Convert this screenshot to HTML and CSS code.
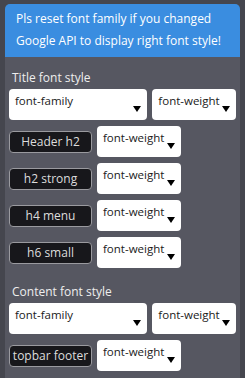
FILE: index.html
```html
<!DOCTYPE html>
<html lang="en">
<head>
    <meta charset="UTF-8">
    <title>Font style</title>
    <link rel="stylesheet" href="styles.css">
</head>
<body>
    <div class="panel">
        <div class="notice">Pls reset font family if you changed Google API to display right font style!</div>

        <div class="group">
            <div class="group-title">Title font style</div>
            <div class="row">
                <div class="select wide">font-family<span class="arrow"></span></div>
                <div class="select">font-weight<span class="arrow"></span></div>
            </div>
            <div class="row">
                <span class="tag">Header h2</span>
                <div class="select">font-weight<span class="arrow"></span></div>
            </div>
            <div class="row">
                <span class="tag">h2 strong</span>
                <div class="select">font-weight<span class="arrow"></span></div>
            </div>
            <div class="row">
                <span class="tag">h4 menu</span>
                <div class="select">font-weight<span class="arrow"></span></div>
            </div>
            <div class="row">
                <span class="tag">h6 small</span>
                <div class="select">font-weight<span class="arrow"></span></div>
            </div>
        </div>

        <div class="group">
            <div class="group-title">Content font style</div>
            <div class="row">
                <div class="select wide">font-family<span class="arrow"></span></div>
                <div class="select">font-weight<span class="arrow"></span></div>
            </div>
            <div class="row">
                <span class="tag">topbar footer</span>
                <div class="select">font-weight<span class="arrow"></span></div>
            </div>
        </div>
    </div>
</body>
</html>
```

FILE: styles.css
```css
body {
    margin: 0;
    background-color: #45464e;
    font-family: "Open Sans", sans-serif;
    font-size: 12px;
}

.panel {
    margin: 4px 5px 0;
    min-height: 374px;
    background-color: #565761;
    border-radius: 5px 5px 0 0;
}

.notice {
    background-color: #3a8de0;
    color: #ffffff;
    border-radius: 5px 5px 0 0;
    padding: 4px 4px 5px 11px;
    font-size: 12px;
    line-height: 22px;
}

.group {
    display: flex;
    flex-direction: column;
    gap: 6px;
    padding: 12px 4px 0;
}

.group + .group {
    padding-top: 15px;
}

.group-title {
    color: #eeeeee;
    font-size: 12px;
    line-height: 18px;
    padding-left: 3px;
    margin-bottom: -4px;
}

.row {
    display: flex;
    align-items: center;
    gap: 5px;
}

.select {
    position: relative;
    box-sizing: border-box;
    width: 84px;
    height: 31px;
    padding: 4px 6px 0;
    background-color: #ffffff;
    border-radius: 4px;
    color: #1a1a1a;
    font-size: 11.5px;
    line-height: 16px;
    white-space: nowrap;
}

.select.wide {
    width: 139px;
}

/* small black triangle of the dropdown */
.arrow {
    position: absolute;
    right: 6px;
    top: 17px;
    width: 0;
    height: 0;
    border-left: 4px solid transparent;
    border-right: 4px solid transparent;
    border-top: 6px solid #000000;
}

.tag {
    box-sizing: border-box;
    width: 83px;
    height: 22px;
    background-color: #17171b;
    border: 1px solid #9a9a9f;
    border-radius: 4px;
    color: #dddddd;
    font-size: 12px;
    line-height: 20px;
    text-align: center;
    white-space: nowrap;
}
```
